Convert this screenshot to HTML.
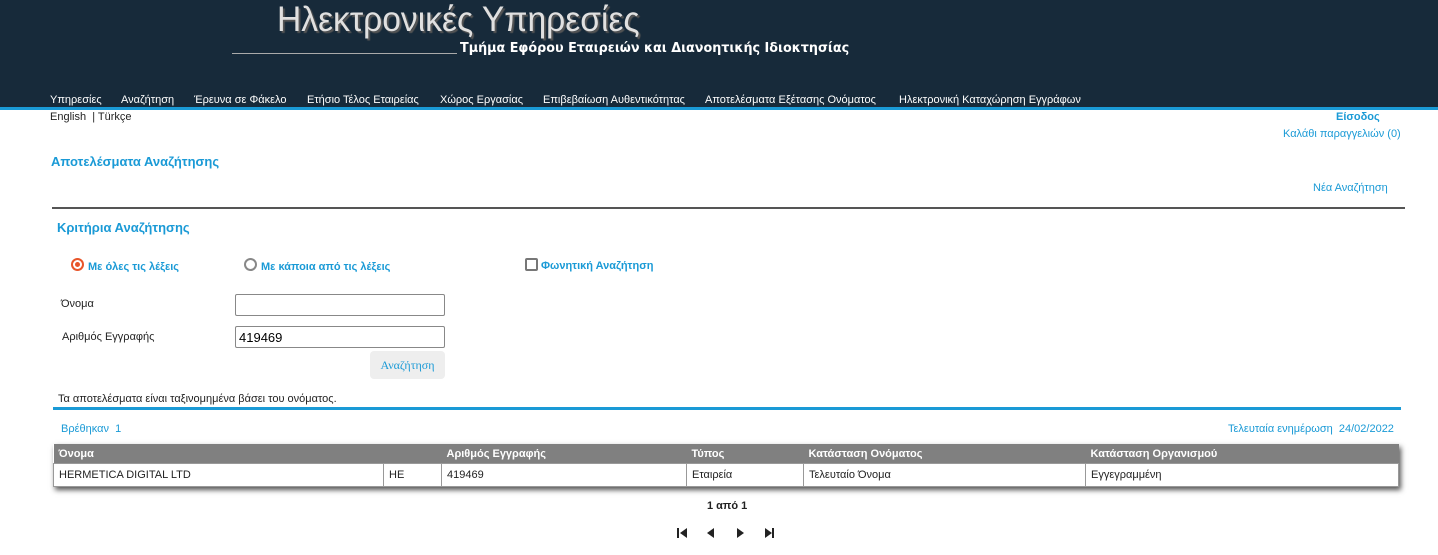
<!DOCTYPE html>
<html><head><meta charset="utf-8"><style>
body{margin:0;width:1438px;height:555px;overflow:hidden;background:#fff;font-family:"Liberation Sans",Arial,sans-serif;font-size:11px;color:#222;position:relative}
.a{position:absolute;white-space:nowrap}
.hdr{position:absolute;left:0;top:0;width:1438px;height:107px;background:#172a3a;border-bottom:3px solid #1a9ad6}
.title{left:277px;top:0px;font-size:35px;color:#e0e0e0;text-shadow:2px 2px 1px #555;transform:scaleX(0.96);transform-origin:left}
.sub{left:460px;top:40px;font-size:13.5px;font-weight:bold;color:#fff;font-family:"DejaVu Sans",sans-serif;transform:scaleX(0.944);transform-origin:left}
.nav span{position:absolute;top:94px;color:#fff;font-size:11px}
.blue{color:#1a9ad6}
input.t{position:absolute;left:235px;width:202px;height:18px;border:1px solid #888;border-radius:2px;padding:1px 3px;font-size:13px;font-family:"Liberation Sans",sans-serif}
table{position:absolute;left:53px;top:444px;width:1346px;border-collapse:collapse;box-shadow:2px 3px 5px #555}
th{background:#808080;color:#fff;text-align:left;font-weight:bold;height:19px;padding:0 5px;font-size:11px}
td{border:1px solid #999;height:22px;padding:0 5px;font-size:11px}
</style></head><body>
<div class="hdr"></div>
<div class="a title">Ηλεκτρονικές Υπηρεσίες</div>
<div class="a" style="left:232px;top:53px;width:225px;border-top:1px solid #aaa"></div>
<div class="a sub">Τμήμα Εφόρου Εταιρειών και Διανοητικής Ιδιοκτησίας</div>
<div class="nav">
<span style="left:50px">Υπηρεσίες</span><span style="left:121px">Αναζήτηση</span><span style="left:194px">Έρευνα σε Φάκελο</span><span style="left:307px">Ετήσιο Τέλος Εταιρείας</span><span style="left:440px">Χώρος Εργασίας</span><span style="left:543px">Επιβεβαίωση Αυθεντικότητας</span><span style="left:705px">Αποτελέσματα Εξέτασης Ονόματος</span><span style="left:899px">Ηλεκτρονική Καταχώρηση Εγγράφων</span>
</div>
<div class="a" style="left:50px;top:111px">English &nbsp;| Türkçe</div>
<div class="a blue" style="left:1336px;top:111px;font-weight:bold">Είσοδος</div>
<div class="a blue" style="left:1283px;top:128px">Καλάθι παραγγελιών (0)</div>
<div class="a blue" style="left:51px;top:154px;font-size:13px;font-weight:bold">Αποτελέσματα Αναζήτησης</div>
<div class="a blue" style="left:1313px;top:182px">Νέα Αναζήτηση</div>
<div class="a" style="left:52px;top:207px;width:1353px;border-top:2px solid #555"></div>
<div class="a blue" style="left:57px;top:220px;font-size:13px;font-weight:bold">Κριτήρια Αναζήτησης</div>
<div class="a" style="left:71px;top:258px;width:9px;height:9px;border:2px solid #e8552a;border-radius:50%"></div>
<div class="a" style="left:75px;top:262px;width:5px;height:5px;background:#e8552a;border-radius:50%"></div>
<div class="a blue" style="left:88px;top:261px;font-weight:bold">Με όλες τις λέξεις</div>
<div class="a" style="left:244px;top:258px;width:9px;height:9px;border:2px solid #888;border-radius:50%"></div>
<div class="a blue" style="left:261px;top:261px;font-weight:bold">Με κάποια από τις λέξεις</div>
<div class="a" style="left:525px;top:258px;width:9px;height:9px;border:2px solid #777;border-radius:2px"></div>
<div class="a blue" style="left:541px;top:260px;font-weight:bold">Φωνητική Αναζήτηση</div>
<div class="a" style="left:61px;top:298px">Όνομα</div>
<input class="t" style="top:294px" value="">
<div class="a" style="left:62px;top:331px">Αριθμός Εγγραφής</div>
<input class="t" style="top:326px" value="419469">
<div class="a blue" style="left:370px;top:351px;width:75px;height:28px;background:#eee;border-radius:4px;line-height:28px;text-align:center;font-family:'Liberation Serif',serif;font-size:12px">Αναζήτηση</div>
<div class="a" style="left:58px;top:393px">Τα αποτελέσματα είναι ταξινομημένα βάσει του ονόματος.</div>
<div class="a" style="left:53px;top:407px;width:1348px;border-top:3px solid #1a9ad6"></div>
<div class="a blue" style="left:61px;top:423px">Βρέθηκαν &nbsp;1</div>
<div class="a blue" style="left:1228px;top:423px">Τελευταία ενημέρωση &nbsp;24/02/2022</div>
<table>
<tr><th colspan="2" style="width:377px">Όνομα</th><th style="width:235px">Αριθμός Εγγραφής</th><th style="width:107px">Τύπος</th><th style="width:272px">Κατάσταση Ονόματος</th><th>Κατάσταση Οργανισμού</th></tr>
<tr><td style="width:319px">HERMETICA DIGITAL LTD</td><td style="width:47px">HE</td><td>419469</td><td>Εταιρεία</td><td>Τελευταίο Όνομα</td><td>Εγγεγραμμένη</td></tr>
</table>
<div class="a" style="left:707px;top:500px;font-weight:bold;font-size:11px">1 από 1</div>
<div class="a" style="left:677px;top:526px;font-size:12px;letter-spacing:0">
<svg width="100" height="14"><g fill="#222"><rect x="0" y="2" width="2" height="10"/><polygon points="10,2 10,12 3,7"/><polygon points="37,2 37,12 30,7"/><polygon points="60,2 60,12 67,7"/><polygon points="88,2 88,12 95,7"/><rect x="95" y="2" width="2" height="10"/></g></svg>
</div>
</body></html>
